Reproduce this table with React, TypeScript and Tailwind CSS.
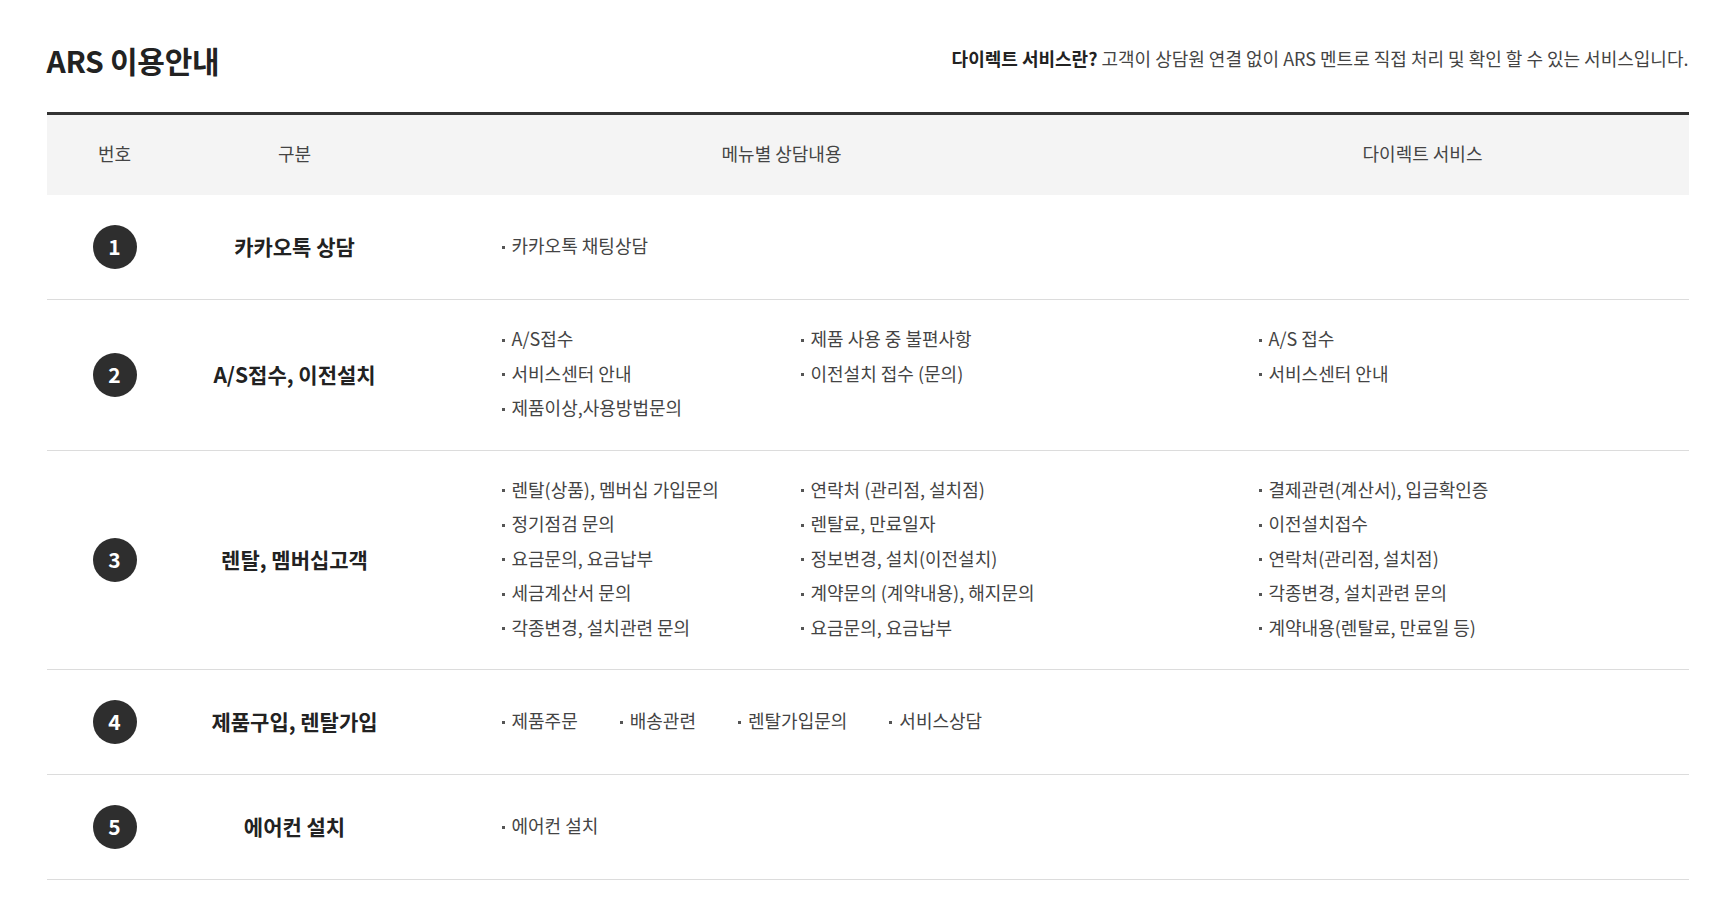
const font = { fontFamily: '"Noto Sans CJK KR", "Noto Sans", sans-serif' };

type Row = {
  no: number;
  title: string;
  menu: string[][];
  inline?: boolean;
  direct: string[];
};

const rows: Row[] = [
  { no: 1, title: "카카오톡 상담", menu: [["카카오톡 채팅상담"]], direct: [] },
  {
    no: 2,
    title: "A/S접수, 이전설치",
    menu: [
      ["A/S접수", "서비스센터 안내", "제품이상,사용방법문의"],
      ["제품 사용 중 불편사항", "이전설치 접수 (문의)"],
    ],
    direct: ["A/S 접수", "서비스센터 안내"],
  },
  {
    no: 3,
    title: "렌탈, 멤버십고객",
    menu: [
      ["렌탈(상품), 멤버십 가입문의", "정기점검 문의", "요금문의, 요금납부", "세금계산서 문의", "각종변경, 설치관련 문의"],
      ["연락처 (관리점, 설치점)", "렌탈료, 만료일자", "정보변경, 설치(이전설치)", "계약문의 (계약내용), 해지문의", "요금문의, 요금납부"],
    ],
    direct: ["결제관련(계산서), 입금확인증", "이전설치접수", "연락처(관리점, 설치점)", "각종변경, 설치관련 문의", "계약내용(렌탈료, 만료일 등)"],
  },
  {
    no: 4,
    title: "제품구입, 렌탈가입",
    menu: [["제품주문", "배송관련", "렌탈가입문의", "서비스상담"]],
    inline: true,
    direct: [],
  },
  { no: 5, title: "에어컨 설치", menu: [["에어컨 설치"]], direct: [] },
];

const Item = ({ text }: { text: string }) => (
  <li className="flex items-center h-[34.5px] pb-[3px] whitespace-nowrap">
    <span className="w-[3px] h-[3px] bg-[#555] mr-[7px] mt-[3px] shrink-0" />
    {text}
  </li>
);

export default function App() {
  return (
    <div className="bg-white min-h-[915px] w-[1735px]" style={font}>
      <div className="w-[1642px] mx-auto">
        <div className="flex items-end justify-between pt-[39px] pb-[31px]">
          <h2 className="text-[30px] font-bold text-[#222] tracking-[-0.3px] leading-[42px]">ARS 이용안내</h2>
          <p className="text-[18px] text-[#444] leading-[26px] mb-[10px]">
            <b className="font-bold text-[#222]">다이렉트 서비스란?</b> 고객이 상담원 연결 없이 ARS 멘트로 직접 처리 및 확인 할 수 있는 서비스입니다.
          </p>
        </div>

        <div className="border-t-[3px] border-[#333]">
          <div className="flex h-[80px] items-center pb-[4px] bg-[#f4f4f4] text-[18px] text-[#444]">
            <div className="w-[136px] text-center">번호</div>
            <div className="w-[224px] text-center">구분</div>
            <div className="w-[750px] text-center">메뉴별 상담내용</div>
            <div className="flex-1 text-center">다이렉트 서비스</div>
          </div>

          {rows.map((row) => (
            <div key={row.no} className="flex items-center min-h-[105px] py-[23px] border-b border-[#dcdcdc] text-[18px] text-[#444]">
              <div className="w-[136px] flex justify-center">
                <span className="w-[44px] h-[44px] rounded-full bg-[#2e2e2e] text-white text-[21px] font-bold flex items-center justify-center">
                  {row.no}
                </span>
              </div>
              <div className="w-[224px] text-center text-[21px] font-bold text-[#222]">{row.title}</div>
              <div className="w-[750px] pl-[95px]">
                {row.inline ? (
                  <ul className="flex gap-[42px]">
                    {row.menu[0].map((t) => (
                      <Item key={t} text={t} />
                    ))}
                  </ul>
                ) : (
                  <div className="flex">
                    {row.menu.map((col, i) => (
                      <ul key={i} className="w-[299px]">
                        {col.map((t) => (
                          <Item key={t} text={t} />
                        ))}
                      </ul>
                    ))}
                  </div>
                )}
              </div>
              <div className="flex-1 pl-[102px] self-start">
                <ul>
                  {row.direct.map((t) => (
                    <Item key={t} text={t} />
                  ))}
                </ul>
              </div>
            </div>
          ))}
        </div>
      </div>
    </div>
  );
}
